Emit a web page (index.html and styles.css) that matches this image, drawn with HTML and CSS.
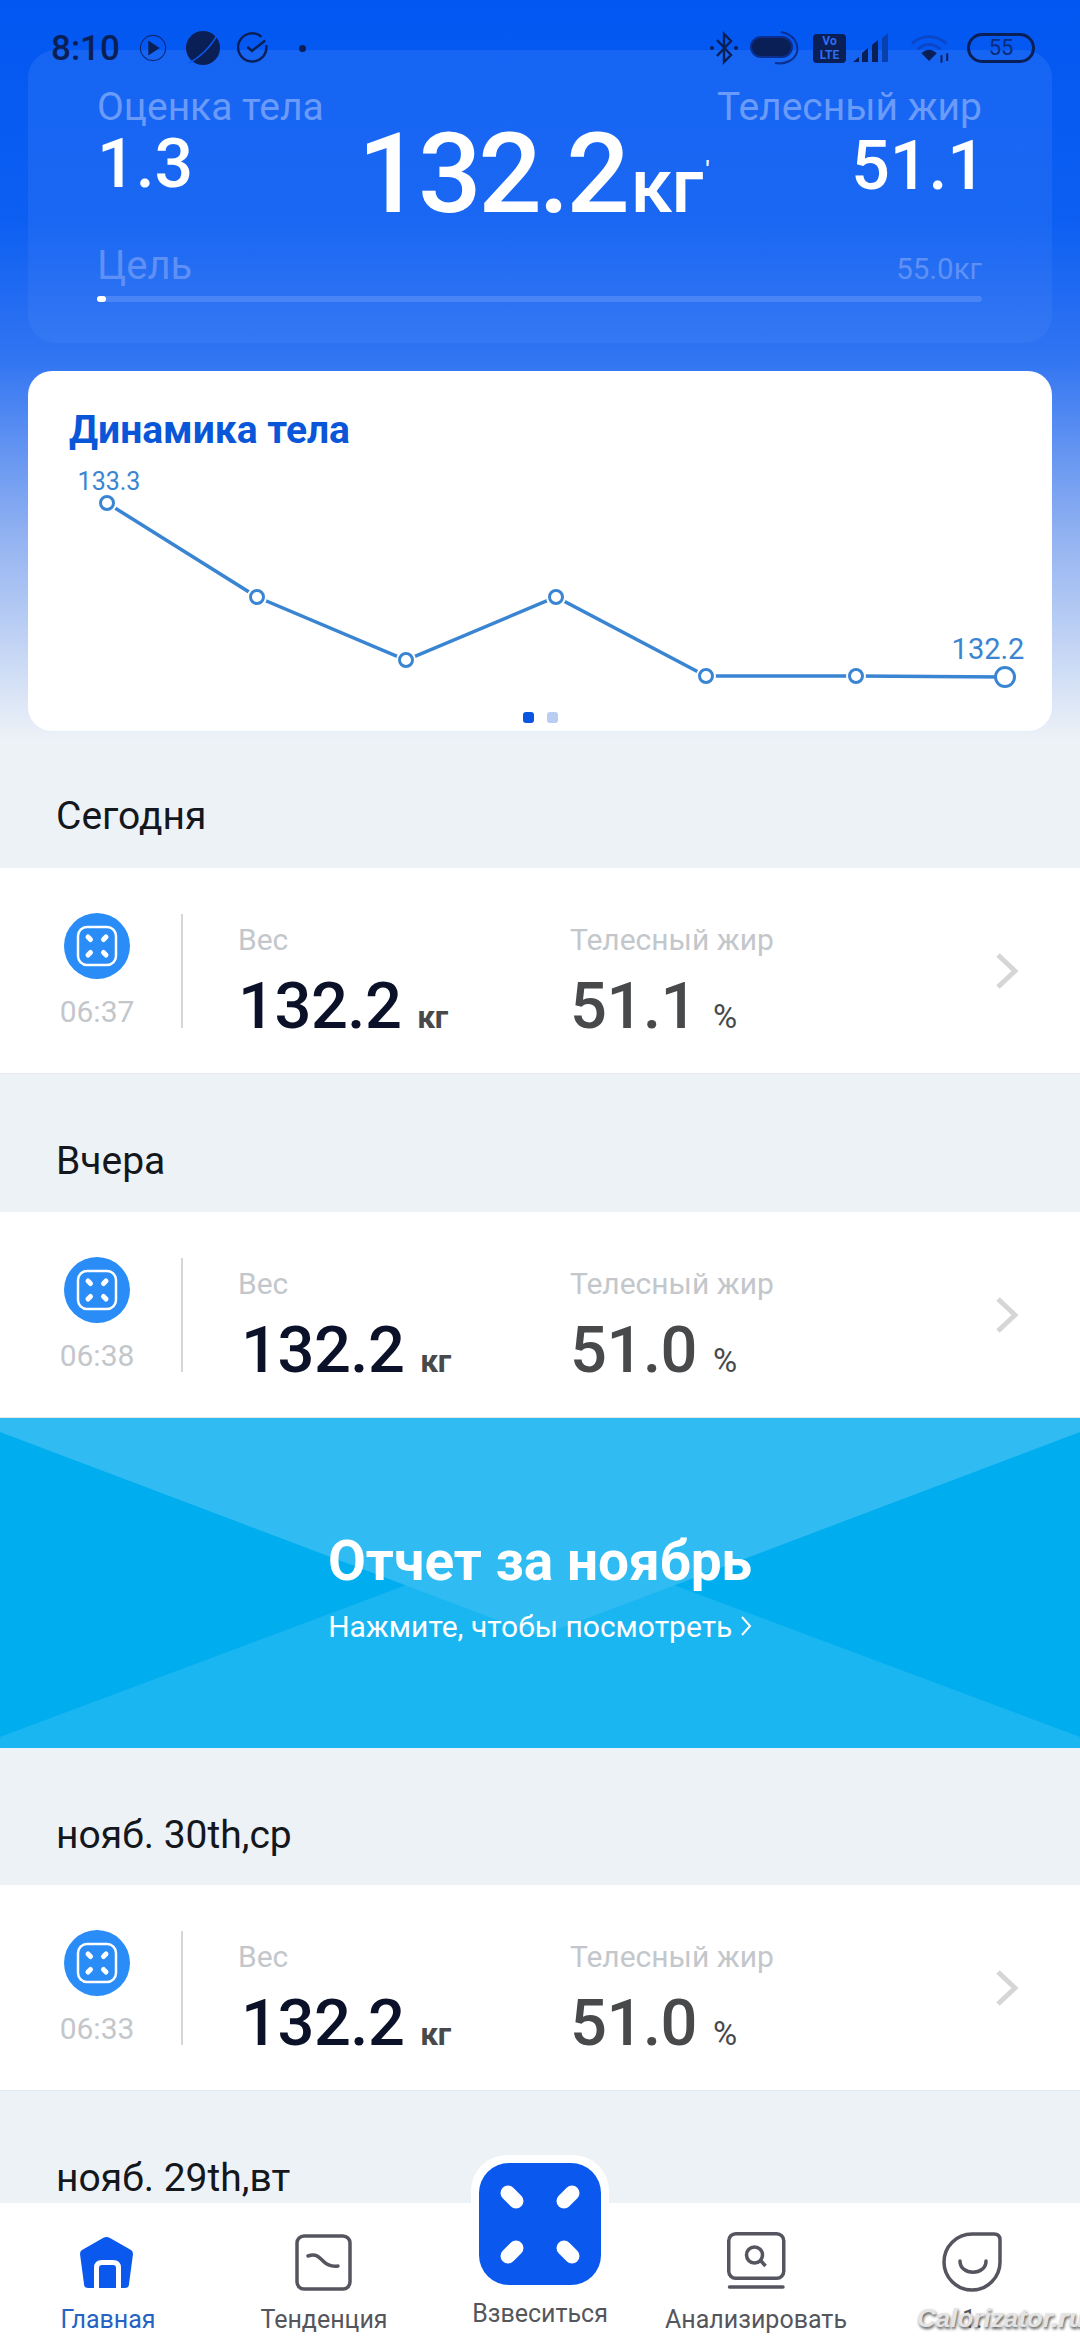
FILE: index.html
```html
<!DOCTYPE html>
<html lang="ru">
<head>
<title>Главная</title>
<meta charset="utf-8">
<link rel="stylesheet" href="styles.css">
</head>
<body>

<div class="statusbar">
  <div class="status-left">
    <span class="clock">8:10</span>
    <svg class="st-play" width="28" height="30" viewBox="0 0 30 30"><circle cx="15" cy="15" r="13.5" fill="none" stroke="#0b2a78" stroke-width="1.2"/><path d="M10 7 L22 15 L10 23 Z" fill="#0a1f55"/></svg>
    <svg class="st-planet" width="36" height="36" viewBox="0 0 38 38"><circle cx="19" cy="19" r="18" fill="#0a1f55"/><path d="M4 35 C14 30 28 18 35 3" fill="none" stroke="#0a58ee" stroke-width="1.600"/></svg>
    <svg class="st-check" width="32" height="34" viewBox="0 0 34 36"><path d="M26 6 A15 15 0 1 0 31 15" fill="none" stroke="#0a1f55" stroke-width="2.600"/><path d="M11 17 L16 21 L30 10" fill="none" stroke="#0a1f55" stroke-width="2.600"/></svg>
    <span class="st-dot"></span>
  </div>
  <div class="status-right">
    <svg class="st-bt" width="30" height="34" viewBox="0 0 30 34"><path d="M8 9 L22 24 L15 31 V3 L22 10 L8 25" fill="none" stroke="#0a1f55" stroke-width="2.400"/><circle cx="3" cy="17" r="2" fill="#0a1f55"/><circle cx="27" cy="17" r="2" fill="#0a1f55"/></svg>
    <svg class="st-pill" width="49" height="34" viewBox="0 0 49 34"><rect x="1" y="6" width="41" height="20" rx="10" fill="#0a1f55" stroke="#0a2f90" stroke-width="2"/><path d="M31 1 C43 3 49 12 47 21 C45 29 35 34 25 32" fill="none" stroke="#0a2f90" stroke-width="2"/></svg>
    <span class="volte">Vo<br>LTE</span>
    <svg class="st-signal" width="40" height="30" viewBox="0 0 40 30"><path d="M0 29 L6 24 V29 Z M9 29 V20 L15 15 V29 Z M19 29 V12 L25 7 V29 Z" fill="#0a1f55"/><path d="M29 29 V5 L35 0 V29 Z" fill="#0a3fb0"/></svg>
    <svg class="st-wifi" width="42" height="33" viewBox="0 0 44 34"><path d="M2 12 C12 2 28 2 38 12" fill="none" stroke="#0a47c8" stroke-width="3"/><path d="M8 18 C15 11 25 11 32 18" fill="none" stroke="#0a47c8" stroke-width="3"/><path d="M12 22 C17 17 23 17 28 22 L20 30 Z" fill="#0a1f55"/><path d="M33 32 V24 M39 22 V30" stroke="#0a1f55" stroke-width="2"/></svg>
    <span class="battery">55</span>
  </div>
</div>

<div class="screen">

  <div class="hero">
    <div class="summary">
      <div class="summary-top">
        <div class="stat">
          <div class="stat-label">Оценка тела</div>
          <div class="stat-value">1.3</div>
        </div>
        <div class="weight">132.2<span class="weight-unit">кг</span><span class="weight-tick">'</span></div>
        <div class="stat stat-right">
          <div class="stat-label">Телесный жир</div>
          <div class="stat-value">51.1</div>
        </div>
      </div>
      <div class="goal">
        <span class="goal-label">Цель</span>
        <span class="goal-value">55.0кг</span>
      </div>
      <div class="goal-track"><div class="goal-fill"></div></div>
    </div>

    <div class="card">
      <div class="card-title">Динамика тела</div>
      <svg class="chart" width="1024" height="240" viewBox="0 0 1024 240">
        <polyline class="chart-line" points="79,6 229,100 378,163 528,100 678,179 828,179 977,180"/>
        <path class="chart-halo" d="M79,6h0 M229,100h0 M378,163h0 M528,100h0 M678,179h0 M828,179h0 M977,180h0"/>
        <circle class="chart-dot" cx="79" cy="6" r="6.500"/>
        <circle class="chart-dot" cx="229" cy="100" r="6.500"/>
        <circle class="chart-dot" cx="378" cy="163" r="6.500"/>
        <circle class="chart-dot" cx="528" cy="100" r="6.500"/>
        <circle class="chart-dot" cx="678" cy="179" r="6.500"/>
        <circle class="chart-dot" cx="828" cy="179" r="6.500"/>
        <circle class="chart-dot" cx="977" cy="180" r="9.500"/>
        <text class="chart-label" x="81" y="-7" text-anchor="middle">133.3</text>
        <text class="chart-label chart-label-big" x="960" y="162" text-anchor="middle">132.2</text>
      </svg>
      <div class="pager"><span class="pager-dot on"></span><span class="pager-dot"></span></div>
    </div>
  </div>

  <div class="day day-first">Сегодня</div>
  <div class="row">
    <div class="row-side">
      <svg class="scale-icon" width="66" height="66" viewBox="0 0 66 66"><use href="#scale"/></svg>
      <span class="row-time">06:37</span>
    </div>
    <div class="row-col">
      <div class="row-label">Вес</div>
      <div class="row-num">132.2<span class="row-unit">кг</span></div>
    </div>
    <div class="row-col row-col-fat">
      <div class="row-label">Телесный жир</div>
      <div class="row-num row-num-fat">51.1<span class="row-unit row-unit-pc">%</span></div>
    </div>
    <svg class="row-arrow" width="26" height="40" viewBox="0 0 26 40"><path d="M4 4 L21 20 L4 36" fill="none" stroke="#d6d6d6" stroke-width="5"/></svg>
  </div>

  <div class="day">Вчера</div>
  <div class="row">
    <div class="row-side">
      <svg class="scale-icon" width="66" height="66" viewBox="0 0 66 66"><use href="#scale"/></svg>
      <span class="row-time">06:38</span>
    </div>
    <div class="row-col">
      <div class="row-label">Вес</div>
      <div class="row-num row-num-in">132.2<span class="row-unit">кг</span></div>
    </div>
    <div class="row-col row-col-fat">
      <div class="row-label">Телесный жир</div>
      <div class="row-num row-num-fat">51.0<span class="row-unit row-unit-pc">%</span></div>
    </div>
    <svg class="row-arrow" width="26" height="40" viewBox="0 0 26 40"><path d="M4 4 L21 20 L4 36" fill="none" stroke="#d6d6d6" stroke-width="5"/></svg>
  </div>

  <div class="banner">
    <svg class="banner-bg" width="1080" height="330" viewBox="0 0 1080 330">
      <polygon points="0,319 540,117 1080,319 1080,330 0,330" fill="#1ab6f1"/>
      <polygon points="0,14 540,218 1080,14 1080,0 0,0" fill="#30bcf2"/>
    </svg>
    <div class="banner-title">Отчет за ноябрь</div>
    <div class="banner-sub">Нажмите, чтобы посмотреть
      <svg width="12" height="22" viewBox="0 0 12 22"><path d="M2 2 L10 11 L2 20" fill="none" stroke="#fff" stroke-width="2"/></svg>
    </div>
  </div>

  <div class="day day-nov">нояб. 30th,ср</div>
  <div class="row">
    <div class="row-side">
      <svg class="scale-icon" width="66" height="66" viewBox="0 0 66 66"><use href="#scale"/></svg>
      <span class="row-time">06:33</span>
    </div>
    <div class="row-col">
      <div class="row-label">Вес</div>
      <div class="row-num row-num-in">132.2<span class="row-unit">кг</span></div>
    </div>
    <div class="row-col row-col-fat">
      <div class="row-label">Телесный жир</div>
      <div class="row-num row-num-fat">51.0<span class="row-unit row-unit-pc">%</span></div>
    </div>
    <svg class="row-arrow" width="26" height="40" viewBox="0 0 26 40"><path d="M4 4 L21 20 L4 36" fill="none" stroke="#d6d6d6" stroke-width="5"/></svg>
  </div>

  <div class="day">нояб. 29th,вт</div>
</div>

<!-- bottom tabs sit over the list -->
<div class="tabbar">
  <div class="tab tab-on">
    <svg width="60" height="60" viewBox="0 0 60 60"><path d="M25 6 Q28.500 4 32 6 L53 18 Q55 19 55 22 L51 52 Q51 56 47 56 H10 Q6 56 6 52 L2 22 Q2 19 4 18 Z" fill="#0a58ee"/><path d="M18.500 56 V36 Q18.500 30.500 24 30.500 H35 Q40.500 30.500 40.500 36 V56" fill="none" stroke="#fff" stroke-width="5"/></svg>
    <span class="tab-name">Главная</span>
  </div>
  <div class="tab">
    <svg width="60" height="60" viewBox="0 0 60 60"><rect x="3" y="4" width="53" height="53" rx="7" fill="none" stroke="#55555f" stroke-width="3.500"/><path d="M14 24 C22 21 25 25 29 29 C33 33 37 35 44 34" fill="none" stroke="#55555f" stroke-width="3.500" stroke-linecap="round"/></svg>
    <span class="tab-name">Тенденция</span>
  </div>
  <div class="tab tab-weigh">
    <div class="weigh-btn">
      <svg width="122" height="122" viewBox="0 0 122 122">
        <rect width="122" height="122" rx="30" fill="#0a58ee"/>
        <g stroke="#fff" stroke-width="15" stroke-linecap="round">
          <path d="M29 30 L37 38"/><path d="M93 30 L85 38"/><path d="M29 93 L37 85"/><path d="M93 93 L85 85"/>
        </g>
      </svg>
    </div>
    <span class="tab-name">Взвеситься</span>
  </div>
  <div class="tab">
    <svg width="60" height="60" viewBox="0 0 60 60"><rect x="2.750" y="1.750" width="55" height="44.500" rx="7" fill="none" stroke="#55555f" stroke-width="3.500"/><circle cx="28.500" cy="23" r="8" fill="none" stroke="#55555f" stroke-width="3.500"/><path d="M35 29 L39.500 34" stroke="#55555f" stroke-width="3.500"/><path d="M3.500 55 H57" stroke="#55555f" stroke-width="3.500" stroke-linecap="round"/></svg>
    <span class="tab-name">Анализировать</span>
  </div>
  <div class="tab">
    <svg width="60" height="60" viewBox="0 0 60 60"><path d="M30 2 H52 Q58 2 58 8 V30 A28 28 0 1 1 30 2 Z" fill="none" stroke="#55555f" stroke-width="3.500"/><path d="M18 29 C18 44 44 44 44 29" fill="none" stroke="#55555f" stroke-width="3.500" stroke-linecap="round"/></svg>
    <span class="tab-name">1:</span>
  </div>
</div>
<div class="watermark">Calorizator.ru</div>

<!-- shared scale glyph -->
<svg class="defs" width="0" height="0">
  <symbol id="scale" viewBox="0 0 66 66">
    <circle cx="33" cy="33" r="33" fill="#2a8cf6"/>
    <rect x="14" y="14" width="38" height="38" rx="9" fill="none" stroke="#fff" stroke-width="2.500"/>
    <g stroke="#fff" stroke-width="5" stroke-linecap="round">
      <path d="M24 24 L26.500 26.500"/><path d="M42 24 L39.500 26.500"/><path d="M24 42 L26.500 39.500"/><path d="M42 42 L39.500 39.500"/>
    </g>
  </symbol>
</svg>

</body>
</html>
```

FILE: styles.css
```css
html, body { margin: 0; padding: 0; }

body {
  width: 1080px;
  height: 2340px;
  overflow: hidden;
  position: relative;
  background: #edf2f7;
  font-family: Roboto, sans-serif;
}

/* status bar */
.statusbar {
  position: absolute;
  top: 22px;
  left: 51px;
  right: 45px;
  height: 52px;
  display: flex;
  justify-content: space-between;
  align-items: center;
  color: #0a1f55;
}
.status-left, .status-right { display: flex; align-items: center; }
.clock { font-size: 35px; font-weight: 500; width: 88px; }
.st-play { margin-right: 18px; }
.st-planet { margin-right: 16px; }
.st-dot { width: 7px; height: 7px; border-radius: 50%; background: #0a1f55; margin-left: 30px; }
.st-bt { margin-right: 11px; }
.st-pill { margin-right: 14px; }
.volte {
  width: 33px;
  height: 29px;
  background: #0a1f55;
  border-radius: 4px;
  color: #2f6df0;
  font-size: 12px;
  font-weight: 700;
  line-height: 14px;
  text-align: center;
  margin-right: 7px;
}
.st-signal { margin-right: 17px; }
.st-wifi { margin-right: 15px; }
.battery {
  width: 68px;
  height: 30px;
  box-sizing: border-box;
  border: 3px solid #0a1f55;
  border-radius: 15px;
  font-size: 22px;
  line-height: 24px;
  text-align: center;
  color: #0a2a7a;
}

/* top gradient */
.hero {
  height: 740px;
  padding: 50px 28px 0;
  box-sizing: border-box;
  background: linear-gradient(180deg, #0257f2 0, #0d5ff2 220px, #3275f2 360px, #8fb0f1 530px, #edf2f7 740px);
}
.summary {
  height: 293px;
  box-sizing: border-box;
  padding: 34px 70px 0 69px;
  border-radius: 28px;
  background: linear-gradient(180deg, rgba(255,255,255,0.07), rgba(255,255,255,0.04));
}
.summary-top { display: flex; justify-content: space-between; height: 160px; }
.stat-label { font-size: 39px; line-height: 44px; margin-top: 1px; color: #6b9bf8; white-space: nowrap; }
.stat-value { font-size: 68px; font-weight: 500; line-height: 70px; color: #fff; }
.stat-right { text-align: right; }
.stat-right .stat-value { margin-right: -4px; padding-top: 2px; }
.weight {
  font-size: 112px;
  font-weight: 500;
  line-height: 120px;
  letter-spacing: -3.4px;
  color: #fff;
  margin-top: 26px;
  margin-left: 23px;
  white-space: nowrap;
}
.weight-unit { font-size: 76px; font-weight: 500; letter-spacing: -1px; margin-left: 4px; }
.weight-tick { font-size: 24px; vertical-align: 34px; margin-left: 3px; }

.goal { display: flex; justify-content: space-between; align-items: baseline; height: 44px; }
.goal-label { font-size: 40px; line-height: 44px; color: #5f90f5; }
.goal-value { font-size: 29.500px; line-height: 44px; color: #5f90f5; }
.goal-track {
  margin-top: 8px;
  height: 6px;
  background: #4a84f6;
  border-radius: 3px;
}
.goal-fill { width: 9px; height: 6px; border-radius: 3px; background: #fff; }

/* chart card */
.card {
  height: 360px;
  margin-top: 28px;
  background: #fff;
  border-radius: 24px;
  position: relative;
}
.card-title {
  padding: 37px 0 0 41px;
  font-size: 39px;
  line-height: 44px;
  font-weight: 700;
  color: #0a56d8;
}
.chart { display: block; margin-top: 45px; overflow: visible; }
.chart-line { fill: none; stroke: #3a85d2; stroke-width: 3.500; }
.chart-halo { fill: none; stroke: #fff; stroke-width: 20; stroke-linecap: round; }
.chart-dot { fill: #fff; stroke: #3a85d2; stroke-width: 3; }
.chart-label { font-family: Roboto, sans-serif; font-size: 25px; fill: #3a85d2; }
.chart-label-big { font-size: 29px; }
.pager {
  position: absolute;
  left: 0;
  right: 0;
  bottom: 8px;
  display: flex;
  justify-content: center;
  gap: 13px;
}
.pager-dot { width: 11px; height: 11px; border-radius: 3px; background: #b9cdf2; }
.pager-dot.on { background: #0a56e0; }

/* day list */
.day {
  height: 138px;
  box-sizing: border-box;
  padding: 65px 0 0 56px;
  font-size: 39px;
  line-height: 44px;
  color: #14171c;
}
.day-first { height: 128px; padding-top: 54px; }
.day-nov { height: 137px; }

.row {
  height: 206px;
  box-sizing: border-box;
  background: #fff;
  border-bottom: 1px solid #e2e8ee;
  display: flex;
  align-items: flex-start;
  position: relative;
}
.row-side {
  width: 183px;
  height: 114px;
  flex: none;
  box-sizing: border-box;
  border-right: 2px solid #d4d6d9;
  display: flex;
  flex-direction: column;
  align-items: center;
  padding-left: 13px;
  margin: 46px 55px 0 0;
}
.scale-icon { flex: none; margin-top: -1px; }
.row-time { font-size: 30px; line-height: 36px; margin-top: 15px; color: #c3c7cb; }
.row-col { width: 332px; flex: none; padding-top: 54px; }
.row-col-fat { width: 400px; }
.row-label { font-size: 30px; line-height: 36px; color: #c3c7cb; }
.row-num {
  font-size: 65px;
  font-weight: 500;
  line-height: 76px;
  letter-spacing: -0.5px;
  color: #0a1128;
  margin-top: 10px;
  white-space: nowrap;
}
.row-num-in { margin-left: 3px; }
.row-num-fat { color: #48494b; }
.row-unit { font-size: 32px; font-weight: 700; color: #48494b; margin-left: 16px; }
.row-unit-pc { font-weight: 400; font-size: 33px; margin-left: 16px; }
.row-arrow { position: absolute; left: 994px; top: 83px; }

/* november banner */
.banner {
  height: 330px;
  box-sizing: border-box;
  padding-top: 113px;
  background: #00aeef;
  position: relative;
  display: flex;
  flex-direction: column;
  align-items: center;
  color: #fff;
}
.banner-bg { position: absolute; top: 0; left: 0; }
.banner-title, .banner-sub { position: relative; }
.banner-title { font-size: 55px; line-height: 60px; font-weight: 700; }
.banner-sub { font-size: 30px; line-height: 40px; margin-top: 16px; }

/* bottom tabs */
.tabbar {
  position: absolute;
  left: 0;
  right: 0;
  bottom: 0;
  height: 137px;
  background: #fff;
  display: flex;
}
.tab {
  flex: 1;
  display: flex;
  flex-direction: column;
  align-items: center;
  padding-top: 29px;
  box-sizing: border-box;
  position: relative;
}
.tab-name { font-size: 25px; line-height: 30px; margin-top: 13px; color: #55565c; white-space: nowrap; }
.tab-on .tab-name { color: #2463c4; }
.weigh-btn {
  position: absolute;
  top: -48px;
  padding: 8px;
  background: #fff;
  border-radius: 36px;
  display: flex;
}
.tab-weigh .tab-name { margin-top: 67px; }
.watermark {
  position: absolute;
  left: 917px;
  top: 2303px;
  font-family: "Liberation Sans", sans-serif;
  font-weight: 700;
  font-style: italic;
  color: #e4e4e4;
  font-size: 26px;
  line-height: 30px;
  white-space: nowrap;
  text-shadow: 1px 2px 3px #555;
}
.defs { position: absolute; }
```
